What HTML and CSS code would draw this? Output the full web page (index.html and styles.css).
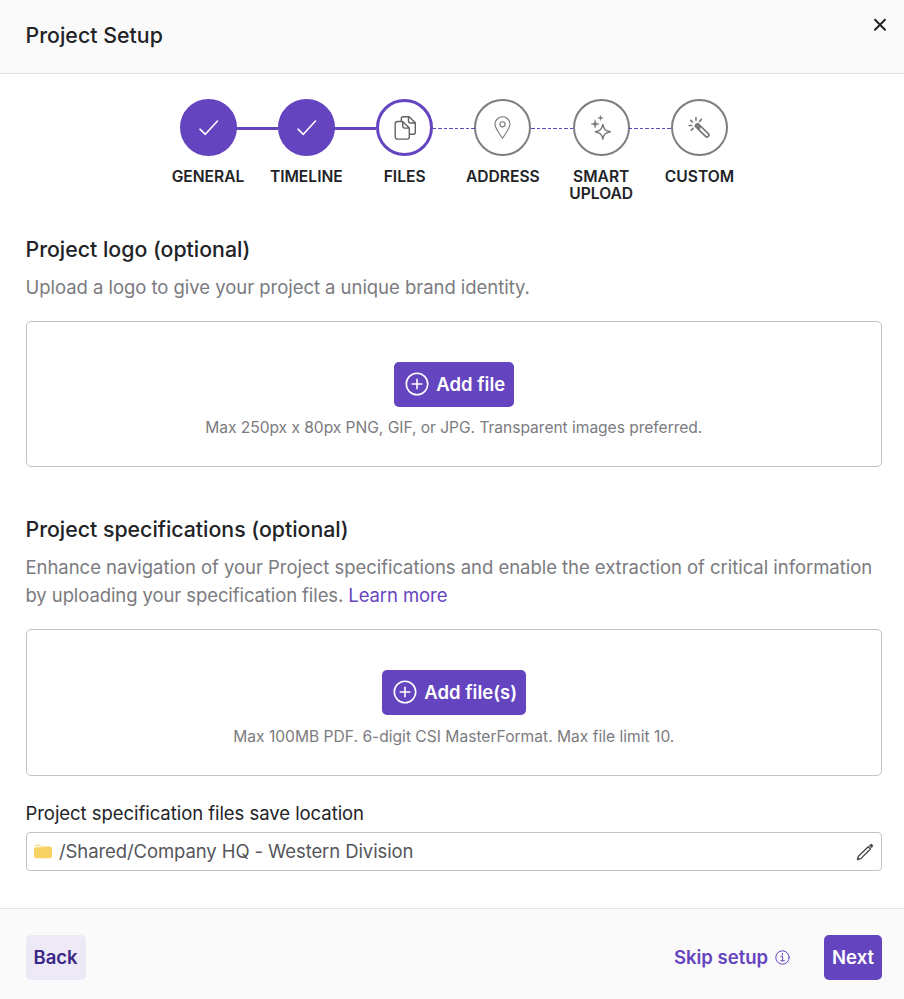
FILE: index.html
```html
<!DOCTYPE html>
<html lang="en">
<head>
<meta charset="utf-8">
<title>Project Setup</title>
<link rel="stylesheet" href="styles.css">
</head>
<body>
<div class="dialog">
  <header class="header">
    <h1 class="title">Project Setup</h1>
    <button class="close" aria-label="Close"><svg width="14" height="14" viewBox="0 0 14 14"><path d="M2 1.800l10 10M12 1.800l-10 10"/></svg></button>
  </header>
  <main class="content">
    <ol class="stepper">
      <li class="step done">
        <span class="dot"><svg width="29" height="29" viewBox="0 0 29 29"><path d="M6 16.200l5.300 5.100L23.500 8"/></svg></span>
        <span class="step-label">GENERAL</span>
      </li>
      <li class="step done">
        <span class="dot"><svg width="29" height="29" viewBox="0 0 29 29"><path d="M6 16.200l5.300 5.100L23.500 8"/></svg></span>
        <span class="step-label">TIMELINE</span>
      </li>
      <li class="step current">
        <span class="dot"><svg width="29" height="29" viewBox="0 0 29 29"><path d="M12.700 8.500H7.500a2.300 2.300 0 0 0-2.300 2.300v13a2.300 2.300 0 0 0 2.300 2.300h9.500a2.300 2.300 0 0 0 2.300-2.300v-8.700zM12.700 8.500v4.300a2.300 2.300 0 0 0 2.300 2.300h4.300M11.300 8.500V5.800a2 2 0 0 1 2-2H19l6.300 6v9.500a2 2 0 0 1-2 2h-4M18.500 3.800v4.200a2 2 0 0 0 2 2h4.800"/></svg></span>
        <span class="step-label">FILES</span>
      </li>
      <li class="step">
        <span class="dot"><svg class="fine" width="29" height="29" viewBox="0 0 29 29"><path d="M14.500 25.200C12 21.200 7 15.500 7 11.300a7.500 7.500 0 0 1 15 0c0 4.200-5 9.900-7.500 13.900z"/><circle cx="14.500" cy="11.300" r="2.600"/></svg></span>
        <span class="step-label">ADDRESS</span>
      </li>
      <li class="step">
        <span class="dot"><svg width="29" height="29" viewBox="0 0 29 29"><path d="M15.800 11.400c1 4.900 2.300 6.200 7.500 7.300-5.200 1.300-6.500 2.600-7.500 7.500-1-4.900-2.300-6.200-7.500-7.500 5.200-1.100 6.500-2.400 7.500-7.300z"/><path class="solid" d="M8.100 7l.9 3 3.200 1-3.200 1-.9 3.200L7.200 12 4 11l3.200-1zM13.500 2.400l.6 1.900 2.100.6-2.100.6-.6 2.100-.6-2.100-2.100-.6 2.100-.6z"/></svg></span>
        <span class="step-label">SMART<br>UPLOAD</span>
      </li>
      <li class="step">
        <span class="dot"><svg width="29" height="29" viewBox="0 0 29 29"><path class="shaft" d="M10.200 13.200l2.700-2.700 10.400 10.200a1.900 1.900 0 0 1-2.700 2.700z"/><path class="tip" d="M11.500 11.900l2.700 2.700"/><path class="rays" d="M11 7.300V4.800M14.600 8.400l1.800-2M7.600 9L5.700 7.300M6.600 12.500H4.200M8.100 15.400l-1.800 1.700"/></svg></span>
        <span class="step-label">CUSTOM</span>
      </li>
    </ol>

    <section class="group">
      <h2>Project logo (optional)</h2>
      <p class="desc">Upload a logo to give your project a unique brand identity.</p>
      <div class="dropzone">
        <button class="btn primary add"><svg width="24" height="24" viewBox="0 0 24 24"><circle cx="12" cy="12" r="10.700"/><path d="M12 7.200v9.600M7.200 12h9.600"/></svg><span>Add file</span></button>
        <p class="hint tight">Max 250px x 80px PNG, GIF, or JPG. Transparent images preferred.</p>
      </div>
    </section>

    <section class="group specs">
      <h2>Project specifications (optional)</h2>
      <p class="desc">Enhance navigation of your Project specifications and enable the extraction of critical information<br><span class="tighter">by uploading your specification files. <a class="link">Learn more</a></span></p>
      <div class="dropzone">
        <button class="btn primary add"><svg width="24" height="24" viewBox="0 0 24 24"><circle cx="12" cy="12" r="10.700"/><path d="M12 7.200v9.600M7.200 12h9.600"/></svg><span>Add file(s)</span></button>
        <p class="hint">Max 100MB PDF. 6-digit CSI MasterFormat. Max file limit 10.</p>
      </div>
    </section>

    <div class="field-label">Project specification files save location</div>
    <div class="location">
      <svg class="folder" width="18" height="15" viewBox="0 0 18 15"><path class="tab" d="M.7 2.200V1.500C.7.900 1.100.5 1.700.5h3.600c.7 0 1.300.4 1.700.9l.7.800z"/><path class="body" d="M0 5c0-1 .7-1.700 1.700-1.700h5.100l1.500-.9h7.700c1.100 0 2 .8 2 1.900v8c0 1.100-.9 2-2 2H2c-1.100 0-2-.9-2-2z"/></svg>
      <span class="path tighter">/Shared/Company HQ - Western Division</span>
      <svg class="pencil" width="18" height="18" viewBox="0 0 18 18"><path d="M1.400 16.700l1-3.500L12.300 3.800l2.200 2.200-9.700 9.600z"/><path class="eraser" d="M13.500 2.500l.7-.7c.6-.6 1.500-.6 2.100 0s.6 1.500 0 2.100l-.7.700z"/></svg>
    </div>
  </main>
  <footer class="footer">
    <button class="btn secondary">Back</button>
    <div class="actions">
      <a class="skip">Skip setup <svg width="15" height="15" viewBox="0 0 15 15"><circle cx="7.500" cy="7.500" r="6.700"/><path d="M6 6.200h1.600v4.500M5.700 10.800h3.800M7.400 3.400v1.300"/></svg></a>
      <button class="btn primary">Next</button>
    </div>
  </footer>
</div>
</body>
</html>
```
FILE: styles.css
```css
* { box-sizing: border-box; }
body {
  margin: 0;
  background: #fff;
  color: #212327;
  font-family: Inter, "Liberation Sans", sans-serif;
  font-size: 18.5px;
  line-height: 28.4px;
}
h1, h2, p, ol { margin: 0; padding: 0; font-weight: inherit; }
button { border: 0; padding: 0; background: none; font: inherit; color: inherit; }
svg { flex: none; fill: none; stroke: currentColor; stroke-linecap: round; stroke-linejoin: round; }

.dialog { display: flex; flex-direction: column; height: 999px; }
.header {
  display: flex;
  justify-content: space-between;
  height: 74px;
  padding: 18px 17.500px 0 25.500px;
  background: #fafafa;
  border-bottom: 1px solid #e2e2e4;
}
.title { font-size: 21.300px; line-height: 34px; font-weight: 500; letter-spacing: .03px; }
.close { display: flex; height: 14px; }
.close svg { stroke-width: 2; }

.content { flex: 1; padding: 25px 22px 0 25.500px; }
.stepper { display: flex; justify-content: center; list-style: none; height: 134px; }
.step { position: relative; width: 98.300px; display: flex; flex-direction: column; align-items: center; }
.step + .step::before {
  content: "";
  position: absolute;
  top: 29px;
  left: -21px;
  width: 42px;
  height: 1px;
  background: repeating-linear-gradient(90deg, #6544bf 0 3.500px, transparent 3.500px 5.500px);
}
.step.done + .step::before { top: 28px; height: 3px; background: #6544bf; }
.dot {
  display: flex;
  align-items: center;
  justify-content: center;
  width: 57px;
  height: 57px;
  border: 2px solid #7d7d82;
  border-radius: 50%;
  color: #77777c;
}
.dot svg { stroke-width: 1.400; }
.dot .fine { stroke-width: 1.100; }
.dot .solid { fill: currentColor; stroke-width: .4; }
.dot .shaft { stroke-width: 1.700; }
.dot .tip { stroke-width: 3; }
.dot .rays { stroke-width: 1.600; }
.done .dot { background: #6544bf; border-color: #6544bf; color: #fff; }
.done .dot svg { stroke-width: 1.600; }
.current .dot { border: 3px solid #6544bf; color: #626266; }
.step-label { margin-top: 12px; text-align: center; font-size: 15.600px; line-height: 17px; font-weight: 600; }

.group { margin-bottom: 46px; }
.specs { margin-bottom: 22.500px; }
h2 { font-size: 21.300px; line-height: 32px; font-weight: 500; }
.desc { margin-top: 8px; color: #7b7b80; letter-spacing: -.04px; }
.tighter { letter-spacing: -.095px; }
.link { color: #6544bf; }
.dropzone {
  display: flex;
  flex-direction: column;
  align-items: center;
  height: 146px;
  margin-top: 19.600px;
  padding-top: 39.500px;
  border: 1px solid #c3c3c6;
  border-radius: 5px;
}
.specs .dropzone { height: 147px; margin-top: 19.400px; }
.btn {
  display: flex;
  align-items: center;
  height: 45px;
  padding: 0 8px;
  border-radius: 5px;
  font-weight: 600;
}
.primary { background: #6544bf; color: #fff; }
.secondary { background: #ede9f6; color: #3b2885; }
.add { gap: 7.500px; padding: 0 8.500px 0 11px; }
.add svg { stroke-width: 1.600; }
.hint { margin-top: 10.500px; font-size: 15.600px; line-height: 22px; color: #7b7b80; }
.tight { letter-spacing: -.04px; }
.specs .hint { margin-top: 11px; }
.field-label { margin-bottom: 5px; letter-spacing: -.05px; }
.location {
  display: flex;
  align-items: center;
  height: 39px;
  padding: 0 7.500px;
  border: 1px solid #c3c3c6;
  border-radius: 4px;
  color: #55555a;
}
.folder { stroke: none; }
.folder .tab { fill: #fae09a; }
.folder .body { fill: #f8d263; }
.path { flex: 1; margin-left: 7px; }
.pencil { color: #444447; stroke-width: 1.300; }
.pencil .eraser { fill: currentColor; stroke-width: .7; }

.footer {
  display: flex;
  justify-content: space-between;
  height: 91px;
  padding: 26px 22px 0 25.500px;
  background: #fafafa;
  border-top: 1px solid #e2e2e4;
}
.actions { display: flex; gap: 34px; }
.skip { display: flex; align-items: center; gap: 7px; height: 45px; color: #6544bf; font-weight: 600; }
.skip svg { stroke-width: 1; }
```
